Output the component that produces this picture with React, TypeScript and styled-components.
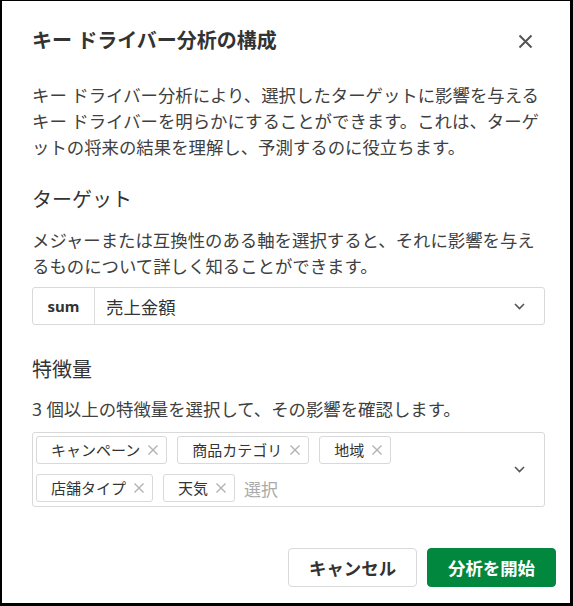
import styled, { createGlobalStyle } from "styled-components";

const GlobalStyle = createGlobalStyle`
  html, body {
    margin: 0;
    padding: 0;
    background: #fff;
  }
  body {
    font-family: "Noto Sans", "Noto Sans CJK JP", sans-serif;
    color: #404040;
  }
  * {
    box-sizing: border-box;
  }
`;

const features = ["キャンペーン", "商品カテゴリ", "地域", "店舗タイプ", "天気"];

const CloseIcon = () => (
  <svg width="15" height="15" viewBox="0 0 15 15">
    <path d="M1.5 1.5 L13.5 13.5 M13.5 1.5 L1.5 13.5" stroke="#555" strokeWidth="2" fill="none" />
  </svg>
);

const TagX = () => (
  <svg width="12" height="12" viewBox="0 0 12 12">
    <path d="M1.5 1.5 L10.5 10.5 M10.5 1.5 L1.5 10.5" stroke="#b0b0b0" strokeWidth="1.3" fill="none" />
  </svg>
);

const Chevron = () => (
  <svg width="11" height="7" viewBox="0 0 11 7">
    <path d="M1 1 L5.5 5.5 L10 1" stroke="#555" strokeWidth="1.6" fill="none" />
  </svg>
);

export default function App() {
  return (
    <>
      <GlobalStyle />
      <Frame>
        <Header>
          <Title>キー ドライバー分析の構成</Title>
          <CloseButton aria-label="閉じる">
            <CloseIcon />
          </CloseButton>
        </Header>
        <Body>
          <Intro>
            キー ドライバー分析により、選択したターゲットに影響を与えるキー ドライバーを明らかにすることができます。これは、ターゲットの将来の結果を理解し、予測するのに役立ちます。
          </Intro>

          <SectionTitle $gap={27}>ターゲット</SectionTitle>
          <SectionText $gap={14}>
            メジャーまたは互換性のある軸を選択すると、それに影響を与えるものについて詳しく知ることができます。
          </SectionText>
          <SelectBox>
            <Aggregation>sum</Aggregation>
            <SelectValue>売上金額</SelectValue>
            <ChevronWrap>
              <Chevron />
            </ChevronWrap>
          </SelectBox>

          <SectionTitle $gap={32}>特徴量</SectionTitle>
          <SectionText $gap={13}>3 個以上の特徴量を選択して、その影響を確認します。</SectionText>
          <MultiSelect>
            <TagArea>
              {features.map((f) => (
                <Tag key={f}>
                  {f}
                  <TagX />
                </Tag>
              ))}
              <Placeholder>選択</Placeholder>
            </TagArea>
            <ChevronWrap>
              <Chevron />
            </ChevronWrap>
          </MultiSelect>
        </Body>
        <Footer>
          <Button>キャンセル</Button>
          <Button $primary>分析を開始</Button>
        </Footer>
      </Frame>
    </>
  );
}

const Frame = styled.div`
  width: 573px;
  height: 606px;
  border-style: solid;
  border-color: #000;
  border-width: 1px 3px 3px 2px;
  background: #fff;
  display: flex;
  flex-direction: column;
`;

const Header = styled.div`
  display: flex;
  align-items: center;
  justify-content: space-between;
  padding: 27px 33px 0 30px;
`;

const Title = styled.h2`
  margin: 0;
  font-size: 20px;
  line-height: 26px;
  font-weight: 700;
  color: #333;
`;

const CloseButton = styled.button`
  width: 24px;
  height: 24px;
  padding: 0;
  border: 0;
  background: transparent;
  display: flex;
  align-items: center;
  justify-content: center;
  cursor: pointer;
`;

const Body = styled.div`
  padding: 0 25px 0 30px;
  display: flex;
  flex-direction: column;
`;

const Intro = styled.p`
  margin: 28px 0 0;
  font-size: 17.4px;
  line-height: 26px;
`;

const SectionTitle = styled.h3<{ $gap: number }>`
  margin: ${(p) => p.$gap}px 0 0;
  font-size: 20px;
  line-height: 26px;
  font-weight: 400;
  color: #333;
`;

const SectionText = styled.p<{ $gap: number }>`
  margin: ${(p) => p.$gap}px 0 0;
  font-size: 17.4px;
  line-height: 26px;
`;

const SelectBox = styled.div`
  margin-top: 8px;
  height: 38px;
  display: flex;
  align-items: stretch;
  border: 1px solid #d9d9d9;
  border-radius: 3px;
`;

const Aggregation = styled.div`
  width: 62px;
  display: flex;
  align-items: center;
  justify-content: center;
  border-right: 1px solid #dcdcdc;
  font-size: 15px;
  font-weight: 700;
  color: #333;
`;

const SelectValue = styled.div`
  flex: 1;
  display: flex;
  align-items: center;
  padding-left: 11px;
  font-size: 17.4px;
  color: #333;
`;

const ChevronWrap = styled.div`
  display: flex;
  align-items: center;
  padding: 0 19px 0 10px;
`;

const MultiSelect = styled.div`
  margin-top: 10px;
  display: flex;
  border: 1px solid #d9d9d9;
  border-radius: 3px;
`;

const TagArea = styled.div`
  flex: 1;
  display: flex;
  flex-wrap: wrap;
  align-items: center;
  gap: 10px 10px;
  padding: 3px 0 4px 3px;
`;

const Tag = styled.span`
  height: 28px;
  display: inline-flex;
  align-items: center;
  gap: 7px;
  padding: 0 7px 0 14px;
  border: 1px solid #d9d9d9;
  border-radius: 3px;
  font-size: 15px;
  line-height: 1;
  color: #333;
`;

const Placeholder = styled.span`
  font-size: 17px;
  color: #aaa;
  margin-left: -1px;
`;

const Footer = styled.div`
  margin-top: 41px;
  display: flex;
  justify-content: flex-end;
  gap: 10px;
  padding-right: 14px;
`;

const Button = styled.button<{ $primary?: boolean }>`
  height: 39px;
  padding: 0 20px;
  border-radius: 4px;
  font-family: inherit;
  font-size: 17.4px;
  font-weight: 700;
  cursor: pointer;
  border: 1px solid ${(p) => (p.$primary ? "#02873f" : "#d9d9d9")};
  background: ${(p) => (p.$primary ? "#02873f" : "#fff")};
  color: ${(p) => (p.$primary ? "#fff" : "#333")};
`;
